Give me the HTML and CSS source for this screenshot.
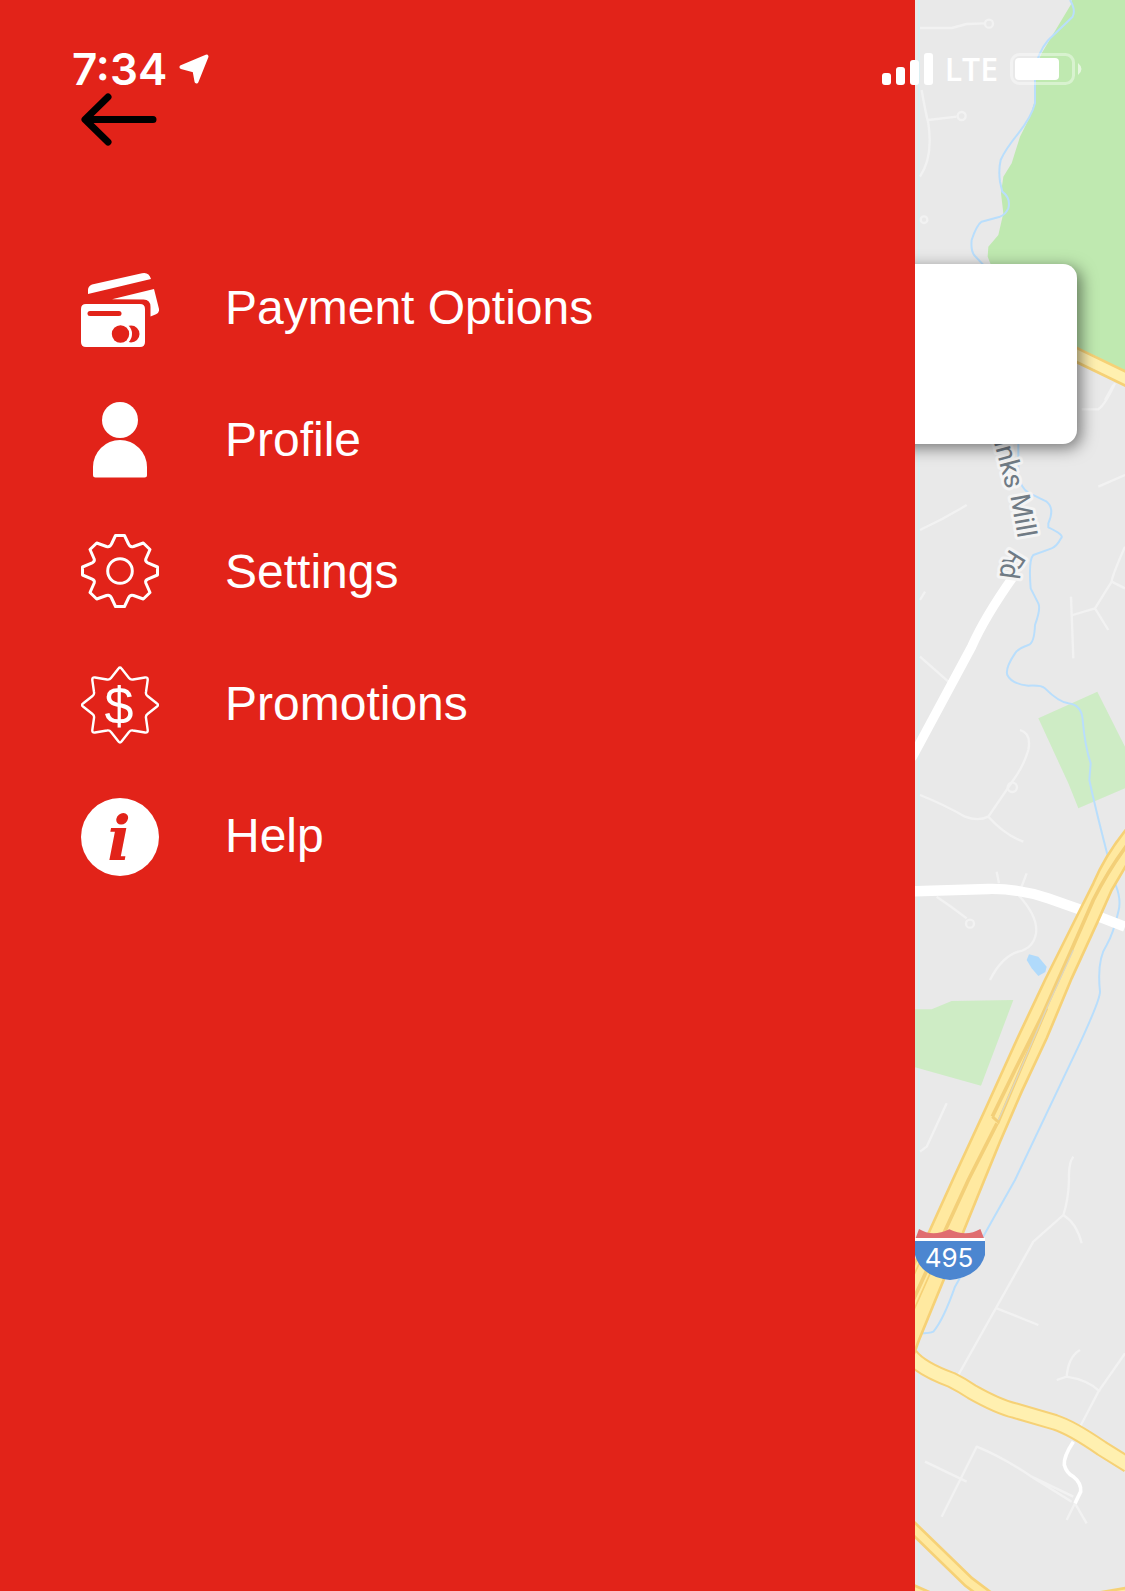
FILE: index.html
```html
<!DOCTYPE html>
<html lang="en">
<head>
<meta charset="utf-8">
<meta name="viewport" content="width=device-width, initial-scale=1">
<title>Menu</title>
<link rel="stylesheet" href="styles.css">
</head>
<body>
<div class="screen">
  <header class="status">
    <div class="status-group">
      <span class="clock">7:34</span>
      <svg class="locate" viewBox="0 0 30 30" aria-hidden="true"><path d="M27.500 2.500 17.500 27.500 15.500 16.500 2.500 13Z" fill="#fff" stroke="#fff" stroke-width="4" stroke-linejoin="round"/></svg>
    </div>
    <div class="status-group">
      <svg class="signal" viewBox="0 0 51 32" aria-hidden="true" fill="#fff"><rect y="20" width="9" height="12" rx="3"/><rect x="14" y="14" width="9" height="18" rx="3"/><rect x="28" y="7" width="9" height="25" rx="3"/><rect x="42" width="9" height="32" rx="3"/></svg>
      <span class="network">LTE</span>
      <svg class="battery" viewBox="0 0 72 32" aria-hidden="true"><rect x="1.500" y="1.500" width="62" height="29" rx="8" fill="none" stroke="#fff" stroke-opacity=".4" stroke-width="3"/><rect x="5" y="5" width="44" height="22" rx="4" fill="#fff"/><path d="M68 10q7 6 0 12Z" fill="#fff" fill-opacity=".6"/></svg>
    </div>
  </header>

  <aside class="drawer">
    <button class="back" type="button" aria-label="Back">
      <svg viewBox="0 0 76 53" aria-hidden="true" fill="none" stroke="#000" stroke-width="7" stroke-linecap="round" stroke-linejoin="round"><path d="M27 4 4 26.500 27 49M5 26.500H72"/></svg>
    </button>
    <nav class="menu">
      <a class="menu-item" href="#payment">
        <svg class="icon" viewBox="0 0 78 78" aria-hidden="true"><path fill="#fff" d="M7 24v-4q0-4 4-5.500L61 3.200q7-1.500 9 5.800ZM31 29.300 73 19l5 20q.5 4-3 5.200l-5.500 2.300V37q0-7.500-7-7.500ZM5 34h54q5 0 5 5v33q0 5-5 5H5q-5 0-5-5V39q0-5 5-5Z"/><rect x="6.500" y="41" width="34" height="5" rx="2.500" fill="#e22319"/><circle cx="50" cy="64" r="8.500" fill="#e22319"/><circle cx="39.500" cy="64" r="11.500" fill="#fff"/><circle cx="39.500" cy="64" r="8.700" fill="#e22319"/></svg>
        <span class="label">Payment Options</span>
      </a>
      <a class="menu-item" href="#profile">
        <svg class="icon" viewBox="0 0 78 78" aria-hidden="true" fill="#fff"><circle cx="39" cy="18" r="18"/><path d="M12 73v-8a27 27 0 0 1 54 0v8q0 2.500-2.500 2.500h-49Q12 75.500 12 73Z"/></svg>
        <span class="label">Profile</span>
      </a>
      <a class="menu-item" href="#settings">
        <svg class="icon" viewBox="0 0 78 78" aria-hidden="true" fill="none" stroke="#fff" stroke-width="3" stroke-linejoin="round"><path d="M34.500 1.500h9L47.500 10q1.500 3.500 5 2.500L62.300 9 69 15.500 64.800 25q-.8 2.500 2 3.800L76.500 33v8L66.800 45.200q-2.800 1.300-2 3.800L69 58.500 62.300 65l-9.800-3.500q-3.500-1-5 2.500l-4 8.500h-9l-4-8.500q-1.500-3.500-5-2.500L15.700 65 9 58.500 13.200 49q.8-2.500-2-3.800L1.500 41v-8l9.700-4.200q2.800-1.300 2-3.800L9 15.500 15.700 9l9.800 3.500q3.500 1 5-2.500Z"/><circle cx="39" cy="37" r="12.300"/></svg>
        <span class="label">Settings</span>
      </a>
      <a class="menu-item" href="#promotions">
        <svg class="icon" viewBox="0 0 78 78" aria-hidden="true"><path fill="none" stroke="#fff" stroke-width="2.400" stroke-linejoin="round" d="M37.500 2.500q1.500-2 3 0L48 12q1.500 2 4 1.500l12-2q3-.5 2.700 2.500l-1.700 12q-.5 2.500 1.500 4l9.500 7.500q2 1.500 0 3L66.500 48q-2 1.500-1.500 4l1.700 12q.3 3-2.700 2.500l-12-2q-2.500-.5-4 1.500l-7.500 9.500q-1.500 2-3 0L30 66q-1.500-2-4-1.500l-12 2q-3 .5-2.700-2.500L13 52q.5-2.500-1.500-4L2 40.500q-2-1.500 0-3L11.500 30q2-1.500 1.500-4l-1.700-12q-.3-3 2.700-2.500l12 2q2.500.5 4-1.500Z"/><text class="dollar" x="38" y="58">$</text></svg>
        <span class="label">Promotions</span>
      </a>
      <a class="menu-item" href="#help">
        <svg class="icon" viewBox="0 0 78 78" aria-hidden="true"><circle cx="39" cy="39" r="39" fill="#fff"/><text class="info" x="38" y="62">i</text></svg>
        <span class="label">Help</span>
      </a>
    </nav>
  </aside>

  <main class="map">
    <svg class="map-art" viewBox="30 0 630 4773" preserveAspectRatio="xMinYMin slice" role="img" aria-label="Map">
      <defs>
        <path id="mill" d="M266 1325 306 1475 320 1510 350 1680"/>
        <path id="rd" d="M316 1644 290 1686 276 1790"/>
      </defs>
      <rect x="30" width="630" height="4773" fill="#e9e9e9"/>
      <path fill="none" stroke="#d3f1f6" stroke-width="4" d="M42 0V4773"/>
      <!-- parks and pond -->
      <path fill="#bfe9b0" d="M500 0V10L410 160 390 205V300L375 350 345 410 320 490 295 530 288 580 295 640 280 705 250 740 248 770 260 800 420 1000 520 1060 660 1135V0Z"/>
      <path fill="#ceecc5" d="M400 2155 577 2075 660 2240V2365L520 2425 490 2350ZM30 3028H80L140 3003 325 3000 228 3257 30 3202Z"/>
      <path fill="#b0dafb" d="M372 2863 400 2870 425 2900 421 2916 400 2928 380 2905 365 2880Z"/>
      <!-- side streets -->
      <g fill="none" stroke="#f2f2f2" stroke-width="7" stroke-linejoin="round">
        <path d="M45 84H140L185 72 240 70M50 270Q60 330 70 370 85 470 45 530M70 360 155 350M600 1200 625 1155M530 1228H580Q600 1215 630 1150M45 1590Q120 1555 185 1515M580 1460 660 1425M660 1640Q620 1730 620 1745L570 1825 503 1845M498 1790 505 1975M570 1825 610 1890M620 1745 660 1765M45 1970 130 2045M345 2190Q380 2200 370 2250 355 2300 325 2340L250 2450Q220 2465 180 2450 120 2415 45 2385M250 2450Q300 2505 355 2525M60 1775 45 1800M95 2690Q140 2720 185 2755M340 2685Q400 2750 393 2800 385 2845 340 2855 290 2870 255 2940M340 2685 365 2620M275 2615 282 2650M125 3310 65 3440 45 3455M505 3470Q490 3490 492 3540 490 3600 475 3645L385 3725 160 4125M475 3645Q515 3670 530 3730M275 3925 400 3975M660 4060 580 4175 520 4290M455 4140 485 4130Q550 4140 585 4175M485 4130Q490 4070 525 4050M110 4550 215 4340Q290 4370 380 4430L505 4490M380 4430 500 4505M60 4385 185 4445M510 4510 485 4560M510 4510 545 4570"/>
        <circle cx="252" cy="71" r="12"/><circle cx="170" cy="348" r="12"/><circle cx="57" cy="659" r="10"/><circle cx="195" cy="2771" r="12"/><circle cx="322" cy="2362" r="14"/>
      </g>
      <!-- stream -->
      <path fill="none" stroke="#b9defc" stroke-width="6" stroke-linejoin="round" d="M495 0Q513 30 503 50L430 120Q395 160 390 220V310Q380 350 340 400 300 450 287 480 280 510 285 545L292 575Q318 595 310 625 300 645 285 650L230 665Q215 675 200 720 197 750 207 765L240 800 340 1330V1430Q350 1465 370 1478L425 1505Q450 1525 430 1570V1582Q480 1605 468 1615 455 1640 440 1645L385 1665Q370 1680 377 1765L400 1810Q408 1825 390 1875 388 1930 370 1935 340 1945 330 1960 300 2005 307 2025 320 2052 370 2057 410 2055 420 2065 460 2105 490 2110 530 2115 533 2160 540 2240 557 2290L553 2340Q570 2420 605 2555L632 2655Q650 2700 640 2735 625 2800 605 2835 575 2880 585 2975 585 3000 520 3140L330 3540 150 3860Q115 3960 85 3995 75 4000 45 4000"/>
      <!-- main roads -->
      <g fill="none" stroke="#fff">
        <path stroke-width="28" d="M325 1730Q240 1850 200 1940L20 2275"/>
        <path stroke-width="31" d="M20 2674 250 2667Q340 2665 430 2695L530 2730 660 2780"/>
        <path stroke-width="11" d="M505 4325Q475 4370 478 4395 485 4420 505 4430 530 4450 527 4475L510 4510"/>
      </g>
      <g fill="none" stroke="#f6d176" stroke-width="46">
        <path d="M400 1000 517 1066 670 1140"/>
        <path stroke-width="50" d="M15 4065Q45 4105 140 4140 170 4155 200 4175 280 4220 330 4232L450 4267Q500 4283 590 4345L670 4395"/>
        <path stroke-width="38" d="M15 4575 190 4745 250 4790M10 4765 90 4800M540 4800 670 4778"/>
      </g>
      <g fill="none" stroke="#fff0b0" stroke-width="30">
        <path d="M400 1000 517 1066 670 1140"/>
        <path stroke-width="38" d="M15 4065Q45 4105 140 4140 170 4155 200 4175 280 4220 330 4232L450 4267Q500 4283 590 4345L670 4395"/>
        <path stroke="#ffe9a0" stroke-width="22" d="M15 4575 190 4745 250 4790M10 4765 90 4800M540 4800 670 4778"/>
      </g>
      <!-- interstate -->
      <path fill="#ffe9a0" stroke="#f6d176" stroke-width="8" d="M670 2480Q600 2565 565 2650L525 2730 420 2940 335 3120 240 3330 143 3540 75 3690 20 3810V4080L42 4020 165 3720 238 3540 285 3425 350 3275 425 3115 500 2935 578 2765 620 2670 670 2585Z"/>
      <path fill="none" stroke="#f3cf78" stroke-width="11" d="M670 2530Q610 2610 565 2700L495 2860 410 3050 330 3210 262 3350M276 3370 190 3540 20 3910"/>
      <path fill="none" stroke="#f6d176" stroke-width="5" d="M120 3720 20 3945M75 3720 20 3840"/>
      <path fill="none" stroke="#f3cf78" stroke-width="9" d="M262 3350 280 3366 350 3200 425 3025"/>
      <path fill="none" stroke="#ddd6bd" stroke-width="4" d="M505 2850 425 3025 350 3200 280 3360"/>
      <!-- route shield -->
      <path fill="#e06d70" d="M42 3687Q82 3712 133 3688 184 3712 226 3687L237 3715H32Z"/>
      <path fill="#fff" d="M30 3714H240V3724H30Z"/>
      <path fill="#4c86d0" d="M30 3723H240V3765Q222 3830 135 3840 48 3830 30 3765Z"/>
      <text class="route" x="132" y="3800">495</text>
      <text class="street"><textPath href="#mill">inks Mill</textPath></text>
      <text class="street"><textPath href="#rd">Rd</textPath></text>
    </svg>
    <div class="card"></div>
  </main>
</div>
</body>
</html>
```
FILE: styles.css
```css
* {
  box-sizing: border-box;
}

body {
  margin: 0;
  font-family: "Liberation Sans", Arial, sans-serif;
}

.screen {
  position: relative;
  display: grid;
  grid-template-columns: 61fr 14fr;
  min-height: 100vh;
  overflow: hidden;
}

svg {
  display: block;
}

/* Status bar floats over both the drawer and the map */
.status {
  position: absolute;
  z-index: 3;
  inset: 0 0 auto;
  display: flex;
  justify-content: space-between;
  padding: 49px 43px 0 72px;
  color: #fff;
}

.status-group {
  display: flex;
  align-items: center;
  gap: 12px;
  height: 40px;
}

.clock {
  font: 600 44px/40px Inter, sans-serif;
}

.locate {
  width: 30px;
  height: 30px;
}

.signal {
  width: 51px;
  height: 32px;
}

.network {
  font: 600 32px/40px "Open Sans", sans-serif;
}

.battery {
  width: 72px;
  height: 32px;
}

.drawer {
  z-index: 2;
  padding: 93px 0 0 81px;
  background: #e22319;
}

.back {
  display: block;
  padding: 0;
  border: 0;
  background: none;
  cursor: pointer;
}

.back svg {
  width: 76px;
  height: 53px;
}

.menu {
  display: flex;
  flex-direction: column;
  margin-top: 97px;
}

.menu-item {
  display: flex;
  align-items: center;
  gap: 66px;
  height: 132px;
  color: #fff;
  text-decoration: none;
}

.icon {
  flex: none;
  width: 78px;
  height: 78px;
}

.label {
  padding-bottom: 2px;
  font-size: 48px;
  line-height: 56px;
}

.dollar {
  font: 52px "Liberation Sans", sans-serif;
  fill: #fff;
  text-anchor: middle;
}

.info {
  font: italic 700 62px "DejaVu Serif", serif;
  fill: #e22319;
  text-anchor: middle;
}

.map {
  position: relative;
  z-index: 1;
  background: #e9e9e9;
}

.map-art {
  position: absolute;
  width: 100%;
  height: 100%;
}

.card {
  position: absolute;
  top: 264px;
  right: 48px;
  left: -48px;
  height: 180px;
  border-radius: 14px;
  background: #fff;
  box-shadow: 4px 4px 16px rgba(0, 0, 0, 0.5);
}

.street {
  font: 400 82px Roboto, sans-serif;
  fill: #707b85;
  stroke: #f4f4f4;
  stroke-width: 18px;
  stroke-linejoin: round;
  paint-order: stroke;
}

.route {
  font: 400 78px Inter, sans-serif;
  fill: #fff;
  text-anchor: middle;
}
```
